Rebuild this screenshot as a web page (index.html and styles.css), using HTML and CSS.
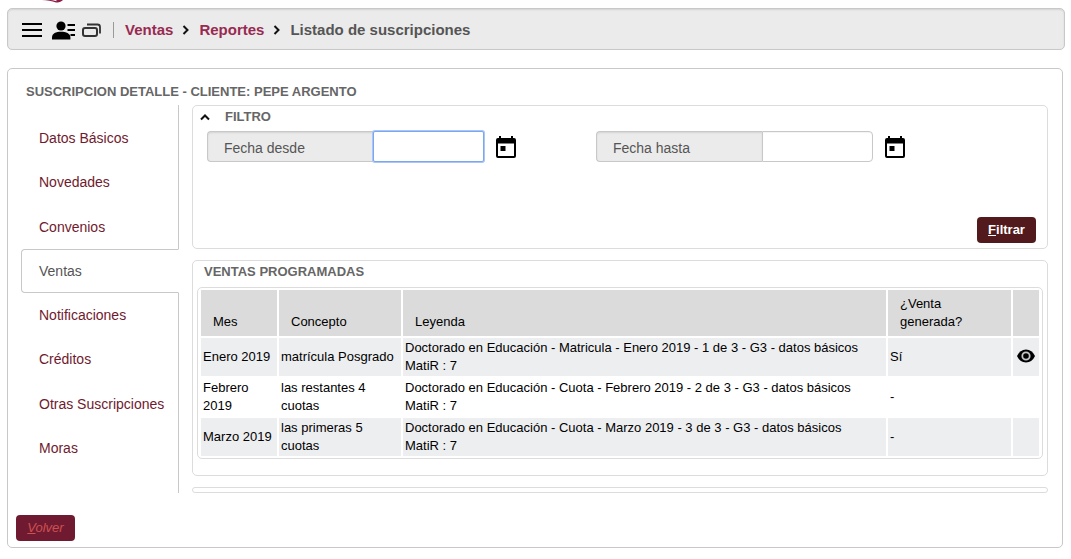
FILE: index.html
```html
<!DOCTYPE html>
<html lang="es">
<head>
<meta charset="utf-8">
<title>Listado de suscripciones</title>
<link rel="stylesheet" href="styles.css">
</head>
<body>
<header class="brand">
  <svg class="brand-mark" width="22" height="3" viewBox="0 0 22 3" aria-hidden="true"><path d="M0 0C5 0 10 1 14 2.4C17 2.8 19 2 21 0H14L15 1.2C12 .5 9 0 7 0Z" fill="#8e1c45"/></svg>
</header>
<nav class="topbar" aria-label="Navegación">
  <button class="icon-btn" type="button" aria-label="Menú">
    <svg width="20" height="16" viewBox="0 0 20 16"><path d="M0 2h20M0 8h20M0 14h20" stroke="#000" stroke-width="2"/></svg>
  </button>
  <button class="icon-btn" type="button" aria-label="Usuario">
    <svg width="23" height="19" viewBox="0 0 23 19"><circle cx="9" cy="5" r="4.6"/><path d="M0 18.500v-2C0 12.500 4 10.800 9 10.800s9.400 1.700 9.400 5.700v2z"/><path d="M15.500 4H23M15.500 9H23M18.500 14H23" stroke="#000" stroke-width="2"/></svg>
  </button>
  <button class="icon-btn" type="button" aria-label="Ventanas">
    <svg width="19" height="15" viewBox="0 0 19 15" fill="none" stroke="#333" stroke-width="2"><rect x="1" y="5" width="14" height="8" rx="2"/><path d="M5 1.500h10.500q2.500 0 2.500 2.500v6.500" stroke-width="1.800"/></svg>
  </button>
  <ol class="crumbs">
    <li><a href="#ventas">Ventas</a></li>
    <li><svg width="8" height="10" viewBox="0 0 8 10" aria-hidden="true"><path d="M1.500 1l4 4-4 4" fill="none" stroke="#111" stroke-width="2"/></svg></li>
    <li><a href="#reportes">Reportes</a></li>
    <li><svg width="8" height="10" viewBox="0 0 8 10" aria-hidden="true"><path d="M1.500 1l4 4-4 4" fill="none" stroke="#111" stroke-width="2"/></svg></li>
    <li>Listado de suscripciones</li>
  </ol>
</nav>
<main class="panel">
  <h1 class="heading panel-title">SUSCRIPCION DETALLE - CLIENTE: PEPE ARGENTO</h1>
  <div class="columns">
    <nav class="tabs" aria-label="Secciones">
      <a class="tab" href="#datos">Datos Básicos</a>
      <a class="tab" href="#novedades">Novedades</a>
      <a class="tab" href="#convenios">Convenios</a>
      <a class="tab tab-active" href="#ventas" aria-current="page">Ventas</a>
      <a class="tab" href="#notificaciones">Notificaciones</a>
      <a class="tab" href="#creditos">Créditos</a>
      <a class="tab" href="#otras">Otras Suscripciones</a>
      <a class="tab" href="#moras">Moras</a>
    </nav>
    <div class="content">
      <form class="box filter">
        <div class="filter-head">
          <button class="icon-btn" type="button" aria-label="Contraer filtro"><svg width="10" height="8" viewBox="0 0 10 8"><path d="M1 6.500l4-4 4 4" fill="none" stroke="#111" stroke-width="2"/></svg></button>
          <h2 class="heading">FILTRO</h2>
        </div>
        <div class="fields">
          <div class="field">
            <label class="field-label" for="desde">Fecha desde</label>
            <input class="field-input focused" id="desde" type="text">
            <button class="icon-btn calendar" type="button" aria-label="Elegir fecha desde">
              <svg width="20" height="22" viewBox="0 0 20 22"><path fill-rule="evenodd" d="M3 0h2v2h10V0h2v2h1q2 0 2 2v16q0 2-2 2H2q-2 0-2-2V4q0-2 2-2h1zM2 7.500V20h16V7.500z"/><path d="M4.500 10h5v5h-5z"/></svg>
            </button>
          </div>
          <div class="field">
            <label class="field-label" for="hasta">Fecha hasta</label>
            <input class="field-input" id="hasta" type="text">
            <button class="icon-btn calendar" type="button" aria-label="Elegir fecha hasta">
              <svg width="20" height="22" viewBox="0 0 20 22"><path fill-rule="evenodd" d="M3 0h2v2h10V0h2v2h1q2 0 2 2v16q0 2-2 2H2q-2 0-2-2V4q0-2 2-2h1zM2 7.500V20h16V7.500z"/><path d="M4.500 10h5v5h-5z"/></svg>
            </button>
          </div>
        </div>
        <button class="btn btn-filter" type="button"><u>F</u>iltrar</button>
      </form>
      <section class="box sales">
        <h2 class="heading sales-title">VENTAS PROGRAMADAS</h2>
        <div class="table-frame">
          <table class="table">
            <colgroup><col class="col-month"><col class="col-concept"><col><col class="col-made"><col class="col-view"></colgroup>
            <thead>
              <tr><th>Mes</th><th>Concepto</th><th>Leyenda</th><th>¿Venta generada?</th><th></th></tr>
            </thead>
            <tbody>
              <tr>
                <td>Enero 2019</td><td>matrícula Posgrado</td>
                <td>Doctorado en Educación - Matricula - Enero 2019 - 1 de 3 - G3 - datos básicos<br>MatiR : 7</td>
                <td>Sí</td>
                <td class="view"><button class="icon-btn" type="button" aria-label="Ver venta"><svg width="18" height="14" viewBox="0 0 18 14"><path d="M0 7Q3 .5 9 .5T18 7Q15 13.500 9 13.500T0 7z"/><circle cx="9" cy="7" r="3.700" fill="none" stroke="#c4c5c7" stroke-width="1.800"/></svg></button></td>
              </tr>
              <tr>
                <td>Febrero 2019</td><td>las restantes 4 cuotas</td>
                <td>Doctorado en Educación - Cuota - Febrero 2019 - 2 de 3 - G3 - datos básicos<br>MatiR : 7</td>
                <td>-</td><td></td>
              </tr>
              <tr>
                <td>Marzo 2019</td><td>las primeras 5 cuotas</td>
                <td>Doctorado en Educación - Cuota - Marzo 2019 - 3 de 3 - G3 - datos básicos<br>MatiR : 7</td>
                <td>-</td><td></td>
              </tr>
            </tbody>
          </table>
        </div>
      </section>
      <div class="box box-empty"></div>
    </div>
  </div>
  <button class="btn btn-back" type="button"><u>V</u>olver</button>
</main>
</body>
</html>
```
FILE: styles.css
```css
* {
  box-sizing: border-box;
}

body {
  margin: 0;
  background: #fff;
  color: #555;
  font-family: "Liberation Sans", Arial, sans-serif;
  font-size: 14px;
  line-height: 20px;
}

a {
  text-decoration: none;
}

svg {
  display: block;
}

.icon-btn {
  padding: 0;
  border: 0;
  background: none;
}

.brand {
  height: 8px;
  padding-left: 42px;
}

.topbar {
  display: flex;
  align-items: center;
  gap: 10px;
  height: 42px;
  margin: 0 6px 18px 7px;
  padding: 2px 14px 0;
  border: 1px solid #c8c8c8;
  border-radius: 5px;
  background: #ebebeb;
  box-shadow: inset 0 1px 2px rgba(0, 0, 0, 0.1);
}

.topbar .icon-btn + .icon-btn + .icon-btn {
  margin-left: -3px;
}

.crumbs {
  display: flex;
  align-items: center;
  gap: 9px;
  height: 16px;
  margin: 0 0 0 2px;
  padding: 0 0 0 11px;
  border-left: 1px solid #999;
  list-style: none;
  font-size: 15px;
  font-weight: bold;
}

.crumbs a {
  color: #982a51;
}

.panel {
  margin: 0 8px 0 7px;
  padding: 13px 14px 6px 13px;
  border: 1px solid #c8c8c8;
  border-radius: 5px;
}

.heading {
  margin: 0;
  color: #666;
  font-size: 13px;
  line-height: 20px;
  font-weight: bold;
}

.panel-title {
  margin: 0 0 3px 5px;
}

.columns {
  display: flex;
  gap: 13px;
}

.tabs {
  display: flex;
  flex-direction: column;
  width: 158px;
}

.tabs::before,
.tabs::after {
  content: "";
  height: 11px;
  border-right: 1px solid #c8c8c8;
}

.tabs::after {
  height: 23px;
}

.tab {
  display: flex;
  flex: 1;
  align-items: center;
  padding: 1px 0 1px 18px;
  border-right: 1px solid #c8c8c8;
  color: #701a2e;
  white-space: nowrap;
}

.tab-active {
  padding: 0 0 0 17px;
  border: 1px solid #c8c8c8;
  border-right-color: transparent;
  border-radius: 4px 0 0 4px;
  color: #555;
}

.content {
  display: flex;
  flex: 1;
  flex-direction: column;
  gap: 11px;
  min-width: 0;
}

.box {
  border: 1px solid #dcdcdc;
  border-radius: 5px;
}

.filter {
  display: flex;
  flex-direction: column;
  height: 144px;
  padding: 1px 11px 5px 7px;
}

.filter-head {
  display: flex;
  align-items: center;
  gap: 15px;
}

.fields {
  display: grid;
  grid-template-columns: 389px 1fr;
  margin: 4px 0 0 7px;
}

.field {
  display: flex;
  align-items: center;
  height: 31px;
}

.field-label {
  width: 166px;
  height: 31px;
  padding: 6px 16px;
  border: 1px solid #c8c8c8;
  border-right: 0;
  border-radius: 4px 0 0 4px;
  background: #ebebeb;
  box-shadow: inset 0 1px 2px rgba(0, 0, 0, 0.1);
  font-size: 14px;
}

.field-input {
  width: 111px;
  height: 31px;
  padding: 0 8px;
  border: 1px solid #c8c8c8;
  border-radius: 0 4px 4px 0;
  background: #fff;
  box-shadow: inset 0 1px 1px rgba(0, 0, 0, 0.05);
  font: inherit;
}

.focused {
  border-color: #7ba7f0;
  border-radius: 2px;
  box-shadow: 0 0 0 1px #a9c6f6;
}

.calendar {
  margin-left: 12px;
}

.btn {
  width: 59px;
  height: 26px;
  padding: 0 0 2px;
  border: 0;
  border-radius: 4px;
  font-family: inherit;
  font-size: 13px;
}

.btn-filter {
  align-self: flex-end;
  margin-top: auto;
  background: #521a1c;
  color: #fff;
  font-weight: bold;
}

.btn-back {
  display: block;
  margin: 22px 0 0 -5px;
  background: #701a31;
  color: #cc5050;
  font-style: italic;
}

.sales {
  padding: 1px 4px 16px;
}

.sales-title {
  margin: 0 0 5px 7px;
}

.table-frame {
  padding: 0 1px;
  border: 1px solid #dcdcdc;
  border-radius: 5px;
}

.table {
  width: 100%;
  border-collapse: separate;
  border-spacing: 2px;
  table-layout: fixed;
  color: #000;
  font-size: 13px;
  line-height: 18px;
}

.col-month {
  width: 76px;
}

.col-concept {
  width: 122px;
}

.col-made {
  width: 123px;
}

.col-view {
  width: 26px;
}

.table th {
  padding: 5px 12px;
  background: #dbdbdb;
  font-weight: normal;
  text-align: left;
  vertical-align: bottom;
}

.table td {
  padding: 1px 2px;
  vertical-align: middle;
}

.table tbody tr:nth-child(odd) td {
  background: #edeef0;
}

.table .view {
  padding: 3px 4px 1px;
}

.box-empty {
  height: 6px;
}
```
